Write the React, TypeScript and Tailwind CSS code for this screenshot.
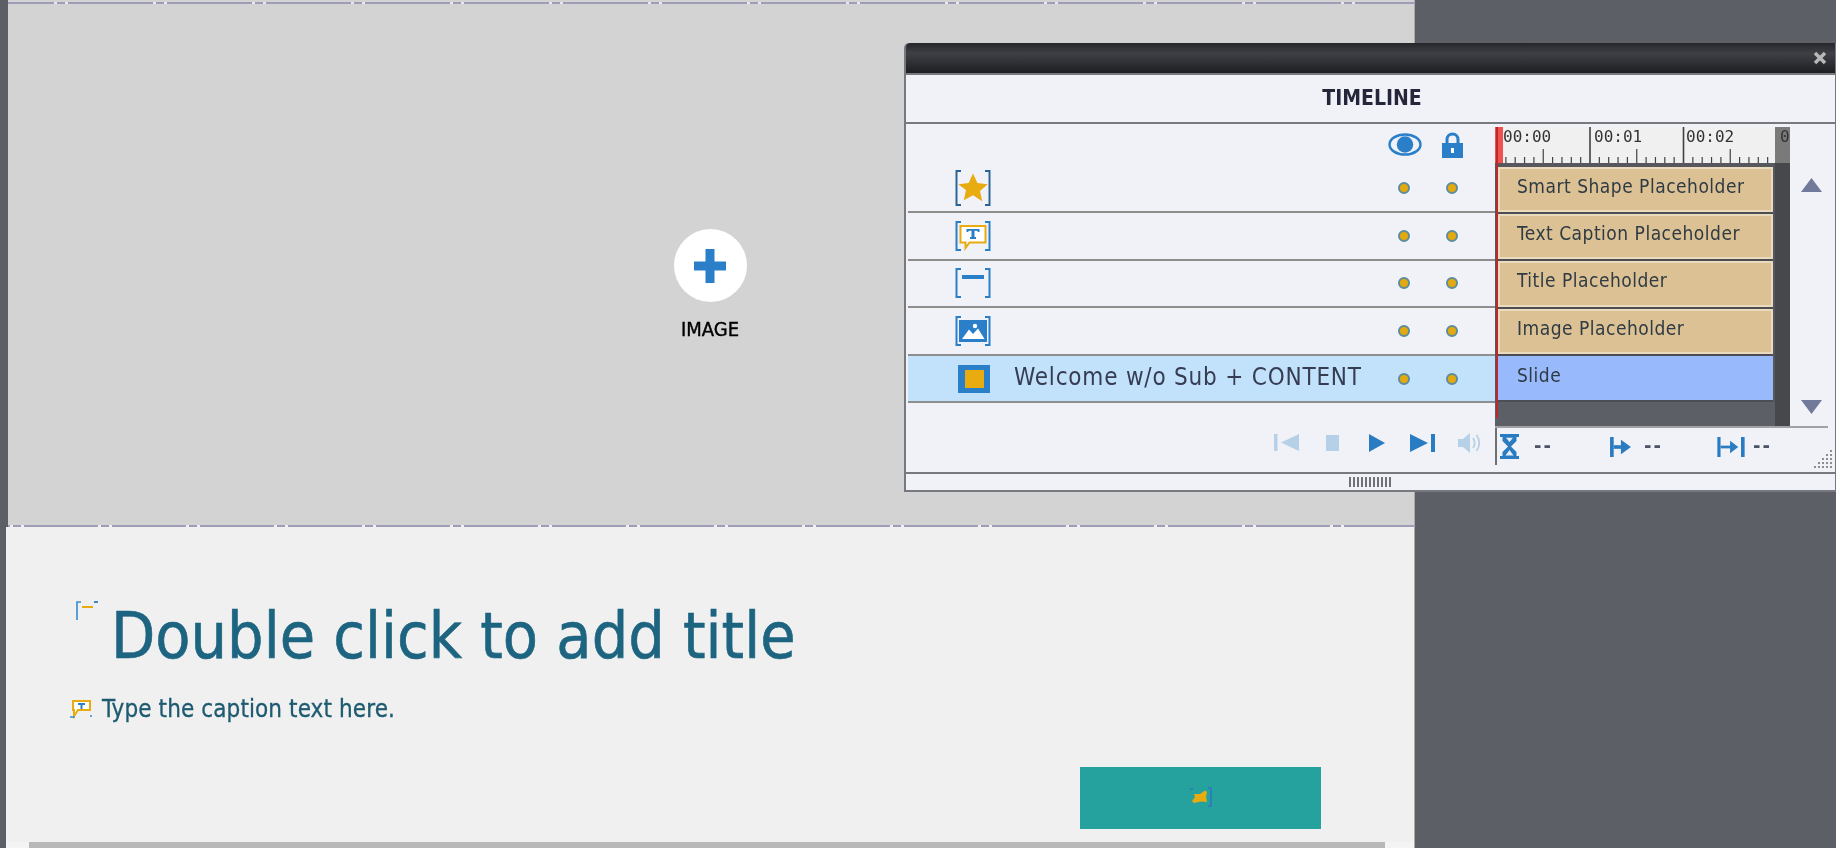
import React from "react";

const rows: { icon: React.ReactNode; label?: string; selected?: boolean }[] = [
  { icon: <StarIcon /> },
  { icon: <CaptionIcon /> },
  { icon: <TitleIcon /> },
  { icon: <ImageIcon /> },
  { icon: <SlideIcon />, label: "Welcome w/o Sub + CONTENT", selected: true },
];

const tracks = [
  { label: "Smart Shape Placeholder", h: "h-[47px]" },
  { label: "Text Caption Placeholder", h: "h-[47px]" },
  { label: "Title Placeholder", h: "h-[48px]" },
  { label: "Image Placeholder", h: "h-[47px]" },
];

function Brackets({ color = "#2a7fc8", h = 30 }: { color?: string; h?: number }) {
  return (
    <path
      d={`M6 1H1.5V${h - 1}H6M30 1H34.5V${h - 1}H30`}
      fill="none"
      stroke={color}
      strokeWidth="2"
    />
  );
}

function StarIcon() {
  return (
    <svg width="36" height="36" viewBox="0 0 36 36">
      <Brackets color="#2c6496" h={36} />
      <path d="M18 3.5l4.4 9.6 10.3 1.1-7.7 6.9 2.2 10.2L18 25.2 8.8 30.3 11 20.1 3.3 14.2l10.3-1.1z" fill="#e8ab10" />
    </svg>
  );
}

function CaptionIcon() {
  return (
    <svg width="36" height="30" viewBox="0 0 36 30">
      <Brackets />
      <path d="M5.5 5H30.5V21.5H14.5L10.5 27V21.5H5.5Z" fill="#fff" stroke="#e8ab10" strokeWidth="2" />
      <path d="M11.5 8H24.5V11H23L22 9.8H19.5V16H21V18H15V16H16.5V9.8H14L13 11H11.5Z" fill="#2a7fc8" />
    </svg>
  );
}

function TitleIcon() {
  return (
    <svg width="36" height="30" viewBox="0 0 36 30">
      <Brackets />
      <rect x="7" y="7" width="22" height="4" fill="#2a7fc8" />
    </svg>
  );
}

function ImageIcon() {
  return (
    <svg width="36" height="30" viewBox="0 0 36 30">
      <Brackets />
      <rect x="4" y="4" width="28" height="22" fill="#2a7fc8" />
      <circle cx="20" cy="10" r="2.2" fill="#fff" />
      <path d="M7 23L14 13.5L18 18L23 12.5L29.5 23Z" fill="#fff" />
    </svg>
  );
}

function SlideIcon() {
  return (
    <div className="ml-[2px] flex h-[28px] w-[32px] items-center justify-center bg-[#2a7fc8]">
      <div className="h-[18px] w-[19px] bg-[#e8ab10]" />
    </div>
  );
}

function Dot() {
  return <div className="h-[12px] w-[12px] rounded-full border-2 border-[#5f8c9a] bg-[#e3a90f]" />;
}

function Ruler() {
  const ticks = [];
  for (let i = 0; i < 30; i++) {
    const x = i * 9.35;
    const major = i % 10 === 0;
    const mid = i % 5 === 0;
    ticks.push(
      <line
        key={i}
        x1={x + 0.5}
        x2={x + 0.5}
        y1={major ? 0 : mid ? 22 : 30}
        y2={36}
        stroke="#3f4246"
        strokeWidth={major ? 1.6 : 1.2}
      />
    );
  }
  return (
    <svg width="280" height="36" viewBox="0 0 280 36" className="absolute left-[-7px] top-0">
      {ticks}
    </svg>
  );
}

function Dashes() {
  return <div className="mt-[-2px] text-[20px] font-bold leading-[24px] tracking-[2px] text-[#4c5568]">--</div>;
}

export default function App() {
  return (
    <div className="relative flex h-[848px] w-[1836px] overflow-hidden bg-[#5d5f67] font-['DejaVu_Sans',sans-serif] font-stretch-condensed blur-[0.6px]">
      {/* Slide */}
      <div className="ml-[6px] flex h-[848px] w-[1409px] flex-col border-r border-[#a9a9ae]">
        <div className="flex h-[527px] flex-col border-l-2 border-[#5d5f67] bg-[#d3d3d3]">
          <div className="mt-[2px] h-[2px] bg-[repeating-linear-gradient(90deg,#9d9db8_0,#9d9db8_46px,#e8e8ee_46px,#e8e8ee_49px,#9d9db8_49px,#9d9db8_57px,#e8e8ee_57px,#e8e8ee_60px,#9d9db8_60px,#9d9db8_99px)]" />
          <div className="flex flex-1 flex-col items-center pr-[2px] pt-[225px]">
            <div className="flex h-[73px] w-[73px] items-center justify-center rounded-full bg-white">
              <svg width="32" height="34" viewBox="0 0 32 34">
                <path d="M11.5 0h9v12.5H32v9H20.5V34h-9V21.5H0v-9h11.5z" fill="#2a7fc8" />
              </svg>
            </div>
            <div className="mt-[16px] text-[20px] leading-[22px] text-black [-webkit-text-stroke:0.4px_#000]">IMAGE</div>
          </div>
          <div className="h-[2px] bg-[repeating-linear-gradient(90deg,#9d9db8_0,#9d9db8_2px,#eeeeee_2px,#eeeeee_5px,#9d9db8_5px,#9d9db8_13px,#eeeeee_13px,#eeeeee_16px,#9d9db8_16px,#9d9db8_88px)]" />
        </div>
        <div className="flex flex-1 flex-col bg-[#f0f0f0]">
          <div className="flex items-start pt-[72px] pl-[69px]">
            <svg width="24" height="20" viewBox="0 0 24 20" className="mt-[2px]">
              <path d="M6 1H2V19" fill="none" stroke="#3a8ad0" strokeWidth="1.6" />
              <path d="M7 6H18" stroke="#e8ab10" strokeWidth="2" />
              <path d="M19 1H23" stroke="#3a8ad0" strokeWidth="2" />
            </svg>
            <div className="ml-[12px] text-[64px] leading-[74px] text-[#1d6480] [-webkit-text-stroke:0.6px_#1d6480]">Double click to add title</div>
          </div>
          <div className="mt-[22px] flex items-center pl-[63px]">
            <svg width="24" height="20" viewBox="0 0 24 20">
              <path d="M4 2H21V11H9L5 17V11H4Z" fill="#fff" stroke="#e8ab10" strokeWidth="2" />
              <path d="M9 5H16M12.5 5V10" stroke="#2a7fc8" strokeWidth="2" />
              <path d="M1 18H6M21 17H23" stroke="#3a8ad0" strokeWidth="1.6" />
            </svg>
            <div className="ml-[9px] text-[24px] leading-[28px] tracking-[0.1px] text-[#1e5a70] [-webkit-text-stroke:0.3px_#1e5a70]">Type the caption text here.</div>
          </div>
          <div className="mt-[44px] ml-[1074px] flex h-[62px] w-[241px] items-center justify-center bg-[#26a29e]">
            <svg width="24" height="20" viewBox="0 0 24 20" className="mb-[2px]">
              <path d="M19 1H22V19H19" fill="none" stroke="#2f74c0" strokeWidth="1.5" />
              <path d="M1 2H4" stroke="#2f74c0" strokeWidth="1.5" />
              <path d="M11 7L16 3.5L18 5L17 10L18 15L12 14.5L5 16L3 14L6 10L5 7Z" fill="#e8ab10" />
            </svg>
          </div>
        </div>
        <div className="flex h-[6px] bg-[#f4f4f4]">
          <div className="ml-[23px] w-[1356px] bg-[#b8b8b8]" />
        </div>
      </div>

      {/* Floating timeline window */}
      <div className="absolute left-[904px] top-[43px] flex h-[449px] w-[932px] flex-col rounded-tl-[5px] border-b-2 border-l-2 border-[#77797e] bg-[#f0f2f8] text-[#333a48] [border-right:1px_solid_#77797e]">
        <div className="flex h-[30px] items-center justify-end rounded-tl-[4px] bg-[linear-gradient(180deg,#26272b_0%,#3f4046_35%,#2f3035_65%,#1d1e21_100%)] pr-[8px]">
          <svg width="14" height="14" viewBox="0 0 14 14">
            <path d="M2 2L12 12M12 2L2 12" stroke="#b8b8b8" strokeWidth="3.4" />
          </svg>
        </div>
        <div className="flex h-[51px] items-center justify-center border-b-2 border-t-2 border-b-[#77797e] border-t-[#77797e] pl-[3px]">
          <span className="text-[21px] font-bold text-[#26263a]">TIMELINE</span>
        </div>
        <div className="flex flex-1">
          {/* Layer list */}
          <div className="flex w-[589px] flex-col pl-[2px]">
            <div className="flex h-[41.5px] items-center justify-end gap-[20px] pr-[32px]">
              <svg width="34" height="23" viewBox="0 0 33 22">
                <ellipse cx="16.5" cy="11" rx="15" ry="9.8" fill="none" stroke="#2a7fc8" strokeWidth="2.4" />
                <circle cx="16.5" cy="11" r="8" fill="#2a7fc8" />
              </svg>
              <svg width="21" height="26" viewBox="0 0 21 26">
                <path d="M5 12V7.5a5.5 5.5 0 0 1 11 0V12" fill="none" stroke="#2a7fc8" strokeWidth="3" />
                <rect x="0" y="11" width="21" height="15" fill="#2a7fc8" />
                <rect x="9" y="16" width="3" height="5" fill="#fff" />
              </svg>
            </div>
            {rows.map((r, i) => (
              <div
                key={i}
                className={`flex h-[47.6px] items-center border-b-2 border-[#8e8e8e] pl-[47px] pr-[37px] ${r.selected ? "bg-[#c2e1fb]" : ""}`}
              >
                <div className="flex w-[36px] justify-center">{r.icon}</div>
                {r.label && <div className="mb-[3px] ml-[23px] text-[24px] leading-[26px] tracking-[0.8px] text-[#363c52]">{r.label}</div>}
                <div className="ml-auto flex gap-[36px]">
                  <Dot />
                  <Dot />
                </div>
              </div>
            ))}
            <div className="flex flex-1 items-center pt-[10px] pl-[366px]">
              <svg width="25" height="17" viewBox="0 0 25 17" fill="#b6d0e8">
                <rect x="0" y="0" width="3.5" height="17" />
                <path d="M25 0V17L7 8.5Z" />
              </svg>
              <div className="ml-[27px] h-[16px] w-[13px] bg-[#b6d0e8]" />
              <svg width="16" height="18" viewBox="0 0 16 18" className="ml-[30px]" fill="#2a7cc2">
                <path d="M0 0L16 9L0 18Z" />
              </svg>
              <svg width="25" height="18" viewBox="0 0 25 18" className="ml-[25px]" fill="#2a7cc2">
                <path d="M0 0L18 9L0 18Z" />
                <rect x="21" y="0" width="4" height="18" />
              </svg>
              <svg width="23" height="22" viewBox="0 0 23 22" className="ml-[23px]" fill="#b6d0e8">
                <path d="M0 7H5L12 1V21L5 15H0Z" />
                <path d="M15 6C17 9 17 13 15 16M18.5 3C22 8 22 14 18.5 19" fill="none" stroke="#b6d0e8" strokeWidth="1.8" />
              </svg>
            </div>
          </div>

          {/* Timeline */}
          <div className="flex flex-1 flex-col">
            <div className="relative flex h-[302px]">
              <div className="absolute left-[1px] top-[3px] z-10 h-[291px] w-[2px] bg-[#b82a2c]" />
              <div className="w-[295px] pt-[3px]">
                <div className="flex h-[36px]">
                  <div className="w-[8px] bg-[#f2504f]" />
                  <div className="relative h-[36px] w-[272px] bg-[#f0f0f0]">
                    <Ruler />
                    <div className="relative flex h-[20px] items-center font-['DejaVu_Sans_Mono',monospace] text-[16px] leading-[20px] text-[#333]">
                      <span className="w-[79px]">00:00</span>
                      <span className="ml-[12px] w-[79px]">00:01</span>
                      <span className="ml-[13px] w-[79px]">00:02</span>
                    </div>
                  </div>
                  <div className="w-[15px] overflow-hidden bg-[#7a7a7a] pl-[5px] font-['DejaVu_Sans_Mono',monospace] text-[16px] leading-[20px] text-[#333]">0</div>
                </div>
                <div className="flex h-[263px]">
                  <div className="flex w-[280px] flex-col bg-[#56585e]">
                    <div className="h-[4px]" />
                    {tracks.map((t) => (
                      <div
                        key={t.label}
                        className={`${t.h} ml-[3px] mr-[2px] border-b-2 border-[#4c4e54]`}
                      >
                        <div className="h-full border-2 border-[#eadbbe] bg-[#dbc193] pl-[17px] text-[19px] leading-[34px] tracking-[0.5px] text-[#2f3a44]">
                          {t.label}
                        </div>
                      </div>
                    ))}
                    <div className="ml-[3px] mr-[2px] h-[46px] border-b-2 border-[#4c4e54] bg-[#98bafc] pl-[19px] text-[19px] leading-[38px] tracking-[0.5px] text-[#2f3a44]">
                      Slide
                    </div>
                    <div className="flex-1 bg-[#5d5f67]" />
                  </div>
                  <div className="w-[15px] bg-[#46484c]" />
                </div>
              </div>
              <div className="flex flex-1 flex-col items-center justify-between pb-[12px] pt-[54px] pr-[2px]">
                <svg width="21" height="14" viewBox="0 0 21 14">
                  <path d="M10.5 0L21 14H0Z" fill="#727a9c" />
                </svg>
                <svg width="21" height="14" viewBox="0 0 21 14">
                  <path d="M0 0H21L10.5 14Z" fill="#727a9c" />
                </svg>
              </div>
            </div>
            <div className="mr-[7px] h-[2px] bg-[#a0a2a6]" />
            <div className="flex flex-1 items-start">
              <div className="h-[37px] w-[2px] bg-[#6d6f73]" />
              <svg width="19" height="25" viewBox="0 0 19 25" className="ml-[3px] mt-[6px]" fill="#2a7cc2">
                <path d="M0 0H19V3H16.5V7L11 12.5L16.5 18V22H19V25H0V22H2.5V18L8 12.5L2.5 7V3H0Z" />
                <path d="M6 3.8H13L9.5 8ZM9.5 16L5.5 21.5H13.5Z" fill="#e8eef6" />
              </svg>
              <div className="ml-[15px] mt-[7px]"><Dashes /></div>
              <svg width="23" height="20" viewBox="0 0 23 22" className="ml-[56px] mt-[9px]" fill="#2a7cc2">
                <rect x="0" y="0" width="4" height="22" />
                <rect x="4" y="9" width="8" height="4" />
                <path d="M12 3L23 11L12 19Z" />
              </svg>
              <div className="ml-[12px] mt-[7px]"><Dashes /></div>
              <svg width="30" height="20" viewBox="0 0 30 22" className="ml-[53px] mt-[9px]" fill="#2a7cc2">
                <rect x="0" y="0" width="3.5" height="22" />
                <rect x="3.5" y="9.5" width="11" height="3" />
                <path d="M14 4L23 11L14 18Z" />
                <rect x="26" y="0" width="4" height="22" />
              </svg>
              <div className="ml-[7px] mt-[7px]"><Dashes /></div>
              <svg width="21" height="21" viewBox="0 0 21 21" className="ml-auto mr-[2px] mt-[20px]" fill="#8e8e8e">
                {[[18,2],[14,6],[18,6],[10,10],[14,10],[18,10],[6,14],[10,14],[14,14],[18,14],[2,18],[6,18],[10,18],[14,18],[18,18]].map(([x, y]) => (
                  <rect key={`${x}-${y}`} x={x} y={y} width="2" height="2" />
                ))}
              </svg>
            </div>
          </div>
        </div>
        <div className="flex h-[18px] items-center border-t-2 border-[#77797e] pl-[443px]">
          <svg width="44" height="10" viewBox="0 0 44 10" fill="#6f7278">
            {Array.from({ length: 11 }, (_, i) => (
              <rect key={i} x={i * 4} y="0" width="2" height="10" />
            ))}
          </svg>
        </div>
      </div>
    </div>
  );
}
